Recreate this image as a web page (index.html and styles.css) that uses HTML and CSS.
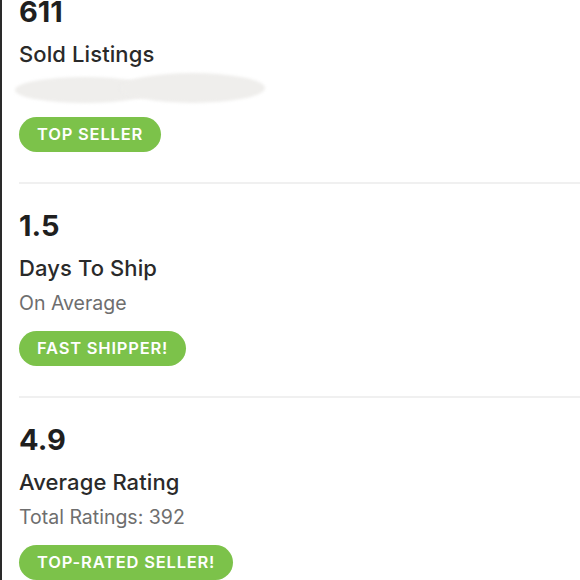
FILE: index.html
```html
<!DOCTYPE html>
<html>
<head>
<meta charset="utf-8">
<link rel="stylesheet" href="styles.css">
</head>
<body>
<div class="page">
  <section class="stat first">
    <div class="num">611</div>
    <div class="title">Sold Listings</div>
    <div class="sub redacted"><span class="blur b1"></span><span class="blur b2"></span></div>
    <div class="badge">TOP SELLER</div>
  </section>
  <section class="stat">
    <div class="num">1.5</div>
    <div class="title">Days To Ship</div>
    <div class="sub">On Average</div>
    <div class="badge">FAST SHIPPER!</div>
  </section>
  <section class="stat">
    <div class="num">4.9</div>
    <div class="title">Average Rating</div>
    <div class="sub">Total Ratings: 392</div>
    <div class="badge">TOP-RATED SELLER!</div>
  </section>
</div>
</body>
</html>
```
FILE: styles.css
```css
html, body {
  margin: 0;
  padding: 0;
  background: #fff;
  height: 100%;
  overflow: hidden;
}
.page {
  border-left: 2px solid #2a2a2a;
  min-height: 100%;
  padding-left: 17px;
  font-family: Inter, "Noto Sans", sans-serif;
  box-sizing: border-box;
}
.stat {
  padding: 24px 0 30px;
  border-bottom: 2px solid #f0f0f0;
  display: flex;
  flex-direction: column;
  align-items: flex-start;
}
.stat.first {
  margin-top: -30px;
}
.num {
  font-size: 29px;
  line-height: 36px;
  font-weight: 700;
  color: #1f1f1f;
}
.title {
  margin-top: 10px;
  font-size: 22px;
  line-height: 28px;
  font-weight: 500;
  color: #2a2a2a;
  letter-spacing: 0.1px;
}
.sub {
  margin-top: 9px;
  font-size: 19.5px;
  line-height: 24px;
  color: #6e6e6e;
  height: 24px;
}
.redacted {
  position: relative;
  width: 250px;
  margin-left: -4px;
}
.blur {
  position: absolute;
  background: #efeeec;
  border-radius: 50%;
  filter: blur(1.5px);
}
.b1 { left: 0; top: 0; width: 140px; height: 26px; }
.b2 { left: 105px; top: -4px; width: 145px; height: 30px; }
.badge {
  margin-top: 16px;
  height: 35px;
  line-height: 35px;
  padding: 0 18px;
  border-radius: 18px;
  background: #7cc24a;
  color: #fff;
  font-size: 16.5px;
  font-weight: 600;
  letter-spacing: 0.8px;
}
```
